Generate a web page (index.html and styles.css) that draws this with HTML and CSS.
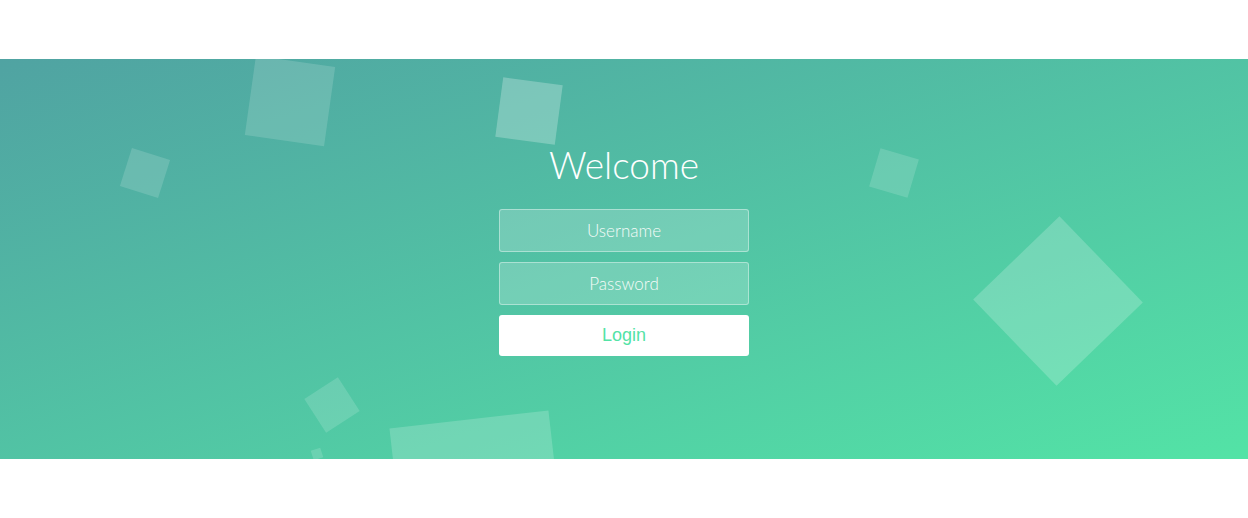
FILE: index.html
```html
<!DOCTYPE html>
<html lang="en">
<head>
<meta charset="utf-8">
<title>Welcome</title>
<link rel="stylesheet" href="styles.css">
</head>
<body>
<div class="wrapper">
  <div class="container">
    <h1 class="title">Welcome</h1>
    <form class="form">
      <input class="field" type="text" placeholder="Username">
      <input class="field" type="password" placeholder="Password">
      <button class="login" type="button">Login</button>
    </form>
  </div>
  <ul class="bubbles">
    <li class="bubble b1"></li>
    <li class="bubble b2"></li>
    <li class="bubble b3"></li>
    <li class="bubble b4"></li>
    <li class="bubble b5"></li>
    <li class="bubble b6"></li>
    <li class="bubble b7"></li>
    <li class="bubble b8"></li>
  </ul>
</div>
</body>
</html>
```
FILE: styles.css
```css
* {
  box-sizing: border-box;
  margin: 0;
  padding: 0;
}

html, body {
  height: 100%;
}

body {
  display: flex;
  align-items: center;
  background: #fff;
  font-family: Lato, "Open Sans", sans-serif;
  font-weight: 300;
  overflow: hidden;
}

.wrapper {
  position: relative;
  width: 100%;
  height: 400px;
  overflow: hidden;
  background: linear-gradient(to bottom right, #50a3a2 0%, #53e3a6 100%);
}

.container {
  position: relative;
  z-index: 2;
  max-width: 600px;
  margin: 0 auto;
  padding: 80px 0;
  height: 400px;
  text-align: center;
}

.title {
  font-size: 37px;
  line-height: 50px;
  font-weight: 300;
  color: #fff;
  padding-top: 1px;
  height: 50px;
}

.form {
  padding: 20px 0;
}

.field {
  display: block;
  appearance: none;
  outline: 0;
  border: 1px solid rgba(255, 255, 255, 0.4);
  background-color: rgba(255, 255, 255, 0.2);
  width: 250px;
  height: 43px;
  border-radius: 3px;
  padding: 10px 15px;
  margin: 0 auto 10px auto;
  text-align: center;
  font-family: Lato, "Open Sans", sans-serif;
  font-size: 17px;
  font-weight: 300;
  line-height: 22px;
  color: #fff;
}

.field::placeholder {
  color: #f4fbf8;
  opacity: 1;
}

.login {
  display: block;
  appearance: none;
  outline: 0;
  background-color: #fff;
  border: 0;
  padding: 10px 15px;
  color: #53e3a6;
  border-radius: 3px;
  width: 250px;
  height: 41px;
  margin: 0 auto;
  cursor: pointer;
  font-family: "Liberation Sans", Arial, sans-serif;
  font-size: 18px;
  line-height: 21px;
}

.bubbles {
  position: absolute;
  top: 0;
  left: 0;
  width: 100%;
  height: 100%;
  z-index: 1;
  list-style: none;
}

.bubble {
  position: absolute;
  display: block;
  background-color: rgba(255, 255, 255, 0.15);
}

.b1 { left: 250px; top: 2px; width: 80px; height: 80px; transform: rotate(8deg); }
.b2 { left: 125px; top: 94px; width: 40px; height: 40px; transform: rotate(17.5deg); }
.b3 { left: 499px; top: 22px; width: 60px; height: 60px; transform: rotate(7.6deg); background-color: rgba(255, 255, 255, 0.25); }
.b4 { left: 874px; top: 94px; width: 40px; height: 40px; transform: rotate(16.5deg); }
.b5 { left: 998px; top: 182px; width: 120px; height: 120px; transform: rotate(46deg); background-color: rgba(255, 255, 255, 0.2); }
.b6 { left: 312px; top: 326px; width: 40px; height: 40px; transform: rotate(57deg); }
.b7 { left: 312px; top: 390px; width: 10px; height: 10px; transform: rotate(-18deg); }
.b8 { left: 398px; top: 360px; width: 160px; height: 160px; transform: rotate(-6.5deg); background-color: rgba(255, 255, 255, 0.18); }
```
